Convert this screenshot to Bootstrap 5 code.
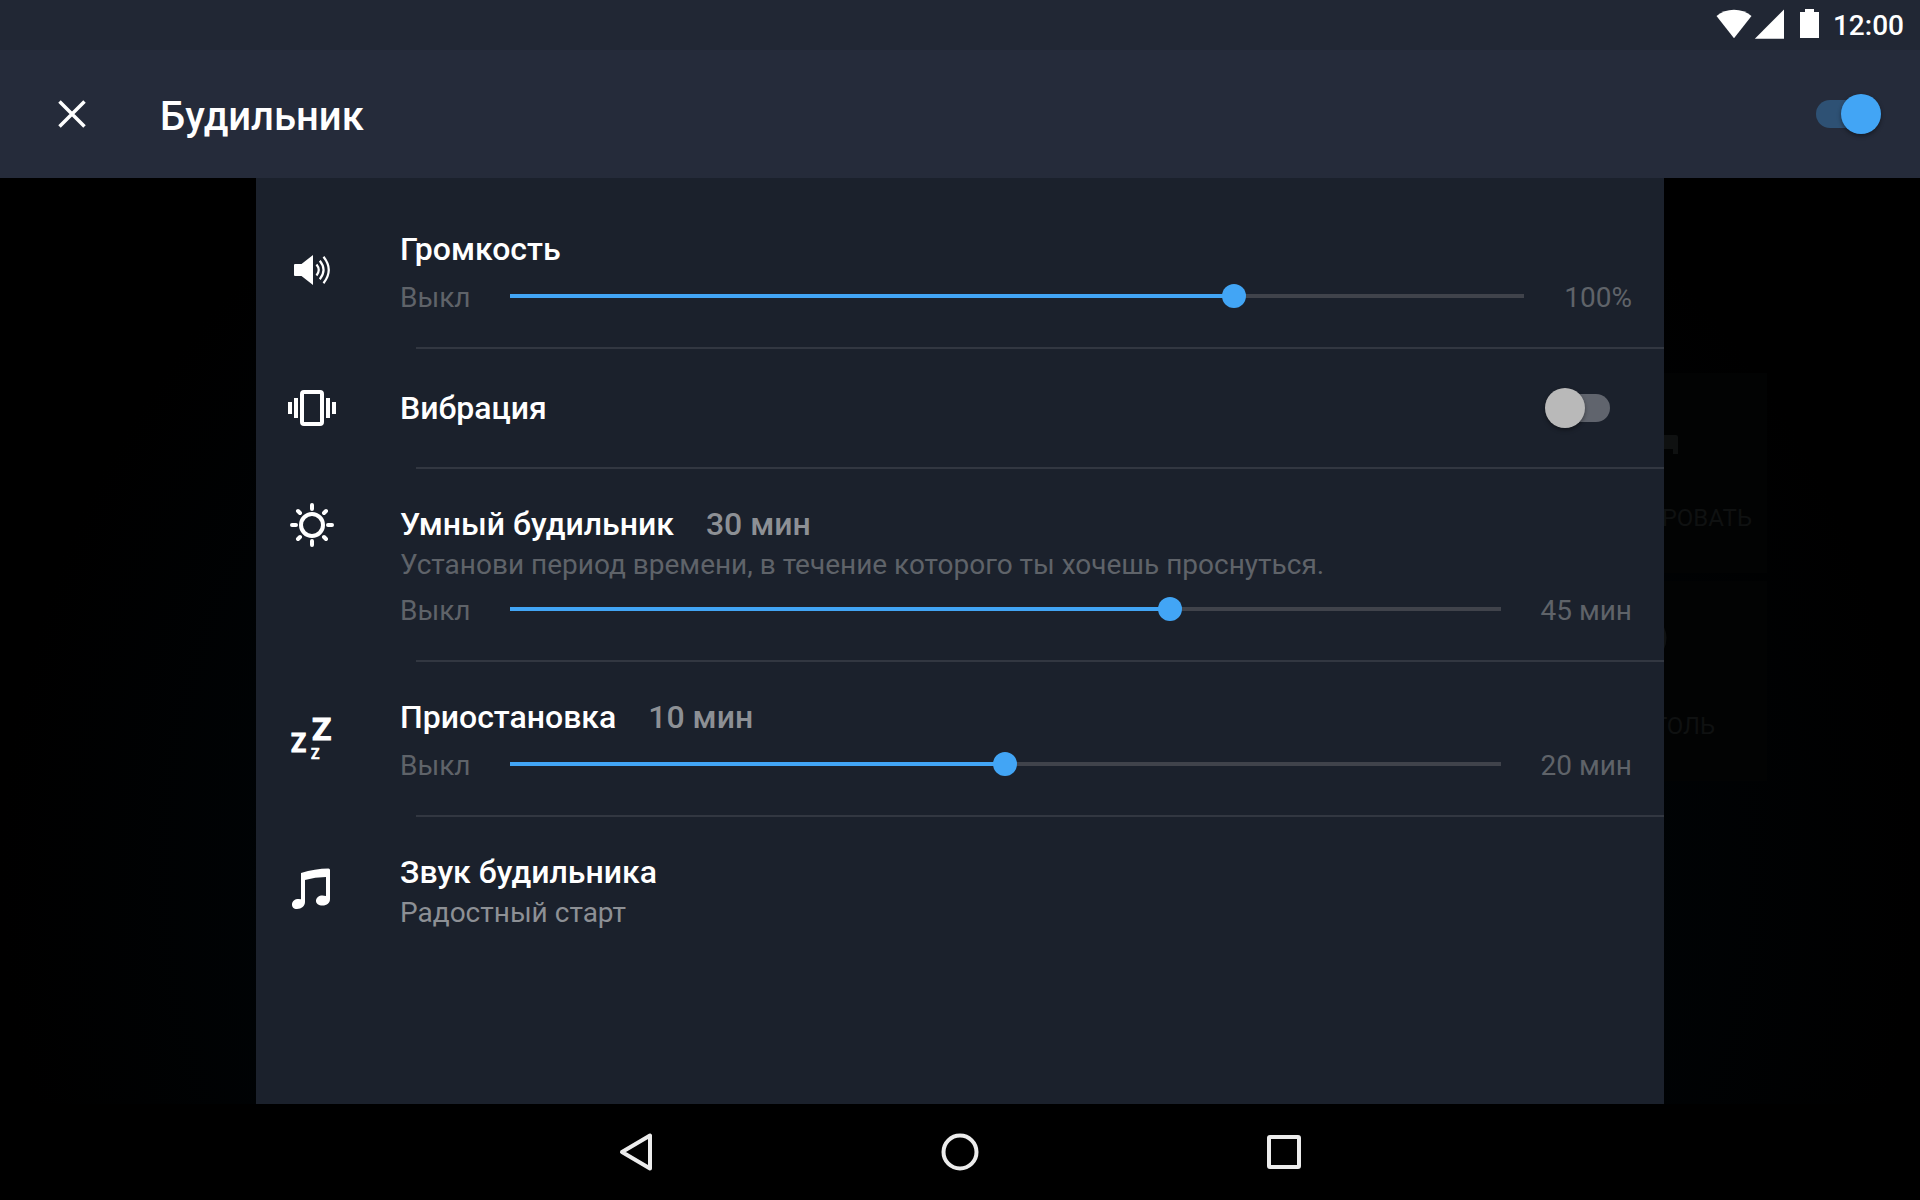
<!DOCTYPE html>
<html lang="ru">
<head>
<meta charset="utf-8">
<meta name="viewport" content="width=device-width, initial-scale=1">
<title>Будильник</title>
<link rel="stylesheet" href="https://cdn.jsdelivr.net/npm/bootstrap@5.3.0/dist/css/bootstrap.min.css">
<style>
  :root { --accent: #42a5f5; --panel: #1b212c; }
  body { font-family: Roboto, "Noto Sans", sans-serif; background: #000; color: #fff; }
  svg { display: block; flex: none; overflow: visible; }

  .status-bar { background: #212734; height: 50px; padding: 2px 16px 0; gap: 14px; font-size: 28px; line-height: 32px; font-weight: 500; }
  .app-header { background: #252b3a; height: 128px; padding: 0 39px 0 48px; }
  .app-title { font-size: 40px; line-height: 48px; padding-top: 6px; margin: 0 0 0 64px; }
  .icon-btn { background: none; border: 0; padding: 0; color: inherit; }

  .stage { background: radial-gradient(ellipse 960px 900px at 50% 75%, #020609 0, #000305 70%, #000 100%); }
  .stage-side { flex: 1 1 0; min-width: 0; }
  .settings-panel { background: var(--panel); width: 1408px; max-width: 100%; padding-top: 16px; }
  .setting { padding: 35px 32px 33px; gap: 64px; }
  .setting-switch { padding: 35px 54px 35px 32px; }
  .setting-title, .setting-value { font-size: 32px; line-height: 40px; font-weight: 500; margin: 0; }
  .setting-value { color: #8d9095; }
  .setting-note { font-size: 28px; line-height: 35px; padding-top: 3px; margin: 0; color: #5f6369; }
  .setting-choice { color: #8d9095; }
  .setting-rule { height: 2px; margin: 0 0 0 160px; border: 0; opacity: 1; background: #323741; }
  .range-line { font-size: 28px; line-height: 32px; margin-top: 13px; color: #5f6369; }

  /* The line stops half a thumb short of each end, so the thumb centre marks the value. */
  .level { --knob: 24px; appearance: none; -webkit-appearance: none; background: none; height: 24px; min-width: 0; margin: 0 28px 4px 27px; }
  .level::-webkit-slider-runnable-track {
    height: 24px;
    background:
      linear-gradient(var(--accent), var(--accent)) 12px 50% / calc((100% - var(--knob)) * var(--part)) 4px no-repeat,
      linear-gradient(#40434b, #40434b) 12px 50% / calc(100% - var(--knob)) 4px no-repeat;
  }
  .level::-webkit-slider-thumb { -webkit-appearance: none; width: 24px; height: 24px; border-radius: 50%; background: var(--accent); }

  .toggle { appearance: none; -webkit-appearance: none; display: grid; align-items: center; width: 65px; height: 40px; margin: 0; flex: none; cursor: pointer; }
  .toggle::before, .toggle::after { content: ""; grid-area: 1 / 1; }
  .toggle::before { width: 60px; height: 28px; border-radius: 14px; background: #60646d; justify-self: end; }
  .toggle::after { width: 40px; height: 40px; border-radius: 50%; background: #b9b9b9; box-shadow: 0 2px 4px rgba(0,0,0,.4); justify-self: start; }
  .toggle:checked::before { background: #2e5174; justify-self: start; }
  .toggle:checked::after { background: var(--accent); justify-self: end; }

  .dimmed { padding-top: 195px; gap: 8px; color: #0f1111; font-size: 24px; line-height: 28px; }
  .dimmed-card { width: 103px; height: 200px; padding-top: 46px; background: #020303; overflow: hidden; white-space: nowrap; }
  .dimmed-label { margin-top: 30px; }
  .dimmed-wide { padding-right: 15px; }
  .dimmed-short { padding-right: 52px; }

  .nav-keys { height: 96px; background: #000; color: #ececec; }
  .nav-keys .icon-btn { width: 324px; max-width: 33%; height: 96px; }
</style>
<script src="https://cdn.jsdelivr.net/npm/bootstrap@5.3.0/dist/js/bootstrap.bundle.min.js"></script>
</head>
<body class="d-flex flex-column min-vh-100">

<div class="status-bar d-flex align-items-center justify-content-end">
  <svg width="103" height="50" viewBox="1716 1 103 50" fill="#fff" aria-hidden="true">
    <path d="M1716.500 16Q1724 9.700 1734 9.700T1751.500 16L1734 38.300Z"/>
    <path d="M1784 9.500V38.700H1754.800Z"/>
    <path d="M1805 9h9v3h5v26h-19V12h5z"/>
  </svg>
  <time>12:00</time>
</div>

<header class="app-header d-flex align-items-center">
  <button class="icon-btn" type="button" aria-label="Закрыть">
    <svg width="48" height="48" viewBox="0 0 48 48" fill="none" stroke="#fff" stroke-width="3.500"><path d="M11.500 11.500l25 25M36.500 11.500l-25 25"/></svg>
  </button>
  <h1 class="app-title"><label for="alarm">Будильник</label></h1>
  <input class="toggle ms-auto" type="checkbox" role="switch" id="alarm" checked>
</header>

<main class="stage flex-grow-1 d-flex">
  <div class="stage-side"></div>

  <div class="settings-panel">
    <section class="setting d-flex align-items-center">
      <svg width="48" height="48" viewBox="0 2 48 48" aria-hidden="true">
        <path fill="#fff" d="M7 18h6.500L25 9v30L13.500 30H7a1 1 0 0 1-1-1V19a1 1 0 0 1 1-1z"/>
        <g fill="none" stroke="#fff" stroke-width="2.200"><path d="M28.500 18.500q4.500 5.500 0 11"/><path d="M31.800 14.800q7.500 9.200 0 18.400"/><path d="M35.500 10.800q10.500 13.200 0 26.400"/></g>
      </svg>
      <div class="flex-grow-1">
        <h2 class="setting-title"><label for="volume">Громкость</label></h2>
        <div class="range-line d-flex align-items-center">
          <span>Выкл</span>
          <input class="level flex-grow-1" type="range" id="volume" min="0" max="7" value="5" style="--part:.7143">
          <span>100%</span>
        </div>
      </div>
    </section>
    <hr class="setting-rule">

    <section class="setting setting-switch d-flex align-items-center">
      <svg width="48" height="48" viewBox="0 0 48 48" aria-hidden="true">
        <rect x="14" y="8" width="20" height="32" rx="2" fill="none" stroke="#fff" stroke-width="4"/>
        <path fill="#fff" d="M0 18h4v12H0zM6 14h4v20H6zM38 14h4v20h-4zM44 18h4v12h-4z"/>
      </svg>
      <h2 class="setting-title"><label for="vibration">Вибрация</label></h2>
      <input class="toggle ms-auto" type="checkbox" role="switch" id="vibration">
    </section>
    <hr class="setting-rule">

    <section class="setting d-flex align-items-start">
      <svg width="48" height="48" viewBox="0 3 48 48" fill="none" stroke="#fff" stroke-width="4" stroke-linecap="round" aria-hidden="true">
        <circle cx="24" cy="24" r="11"/>
        <path d="M24 4v4M24 40v4M4 24h4M40 24h4M10 10l2 2M36 36l2 2M38 10l-2 2M12 36l-2 2"/>
      </svg>
      <div class="flex-grow-1">
        <div class="d-flex gap-4">
          <h2 class="setting-title"><label for="smart">Умный будильник</label></h2>
          <output class="setting-value ms-2" for="smart">30 мин</output>
        </div>
        <p class="setting-note">Установи период времени, в течение которого ты хочешь проснуться.</p>
        <div class="range-line d-flex align-items-center">
          <span>Выкл</span>
          <input class="level flex-grow-1" type="range" id="smart" min="0" max="45" value="30" style="--part:.6667">
          <span>45 мин</span>
        </div>
      </div>
    </section>
    <hr class="setting-rule">

    <section class="setting d-flex align-items-center">
      <svg width="48" height="48" viewBox="0 1 48 48" fill="#fff" stroke="#fff" stroke-width="1" font-weight="700" aria-hidden="true">
        <text x="24" y="25" font-size="32">Z</text>
        <text x="3" y="37" font-size="25">Z</text>
        <text x="23" y="44" font-size="14" stroke-width=".500">Z</text>
      </svg>
      <div class="flex-grow-1">
        <div class="d-flex gap-4">
          <h2 class="setting-title"><label for="snooze">Приостановка</label></h2>
          <output class="setting-value ms-2" for="snooze">10 мин</output>
        </div>
        <div class="range-line d-flex align-items-center">
          <span>Выкл</span>
          <input class="level flex-grow-1" type="range" id="snooze" min="0" max="20" value="10" style="--part:.5">
          <span>20 мин</span>
        </div>
      </div>
    </section>
    <hr class="setting-rule">

    <section class="setting d-flex align-items-center">
      <svg width="48" height="48" viewBox="0 3 48 48" fill="#fff" aria-hidden="true">
        <path d="M13 9Q27 4.500 40.500 4.500Q42 4.500 42 6V35C42 39 39 41.500 34.500 41.500C30.500 41.500 28 39.500 28 37C28 33.500 31 31.500 34.500 31.500Q36 31.500 38 32V13Q27 13 17 16V38C17 42 13.500 45 9 45C5.500 45 4 43 4 40.500C4 37 7 35 10.500 35Q11.500 35 13 35.300Z"/>
      </svg>
      <div>
        <h2 class="setting-title">Звук будильника</h2>
        <p class="setting-note setting-choice">Радостный старт</p>
      </div>
    </section>
  </div>

  <aside class="dimmed stage-side d-flex flex-column" aria-hidden="true">
    <div class="dimmed-card">
      <svg width="103" height="55" viewBox="0 1 103 55" fill="currentColor"><path d="M0 17h12q2 0 2 2v17H9v-5H0z"/></svg>
      <div class="dimmed-label dimmed-wide d-flex justify-content-end">РОВАТЬ</div>
    </div>
    <div class="dimmed-card">
      <svg width="103" height="55" viewBox="0 1 103 55" fill="currentColor"><path d="M0 1q5 11 0 22z"/></svg>
      <div class="dimmed-label dimmed-short d-flex justify-content-end">ГОЛЬ</div>
    </div>
  </aside>
</main>

<nav class="nav-keys d-flex justify-content-center" aria-label="Система">
  <button class="icon-btn d-flex align-items-center justify-content-center" type="button" aria-label="Назад">
    <svg width="48" height="48" viewBox="0 0 48 48" fill="none" stroke="currentColor" stroke-width="4" stroke-linejoin="round"><path d="M38 7.500v33L10 24z"/></svg>
  </button>
  <button class="icon-btn d-flex align-items-center justify-content-center" type="button" aria-label="Домой">
    <svg width="48" height="48" viewBox="0 0 48 48" fill="none" stroke="currentColor" stroke-width="4"><circle cx="24" cy="24" r="16.500"/></svg>
  </button>
  <button class="icon-btn d-flex align-items-center justify-content-center" type="button" aria-label="Обзор">
    <svg width="48" height="48" viewBox="0 0 48 48" fill="none" stroke="currentColor" stroke-width="4"><rect x="9" y="9" width="30" height="30" rx="1"/></svg>
  </button>
</nav>
</body>
</html>
